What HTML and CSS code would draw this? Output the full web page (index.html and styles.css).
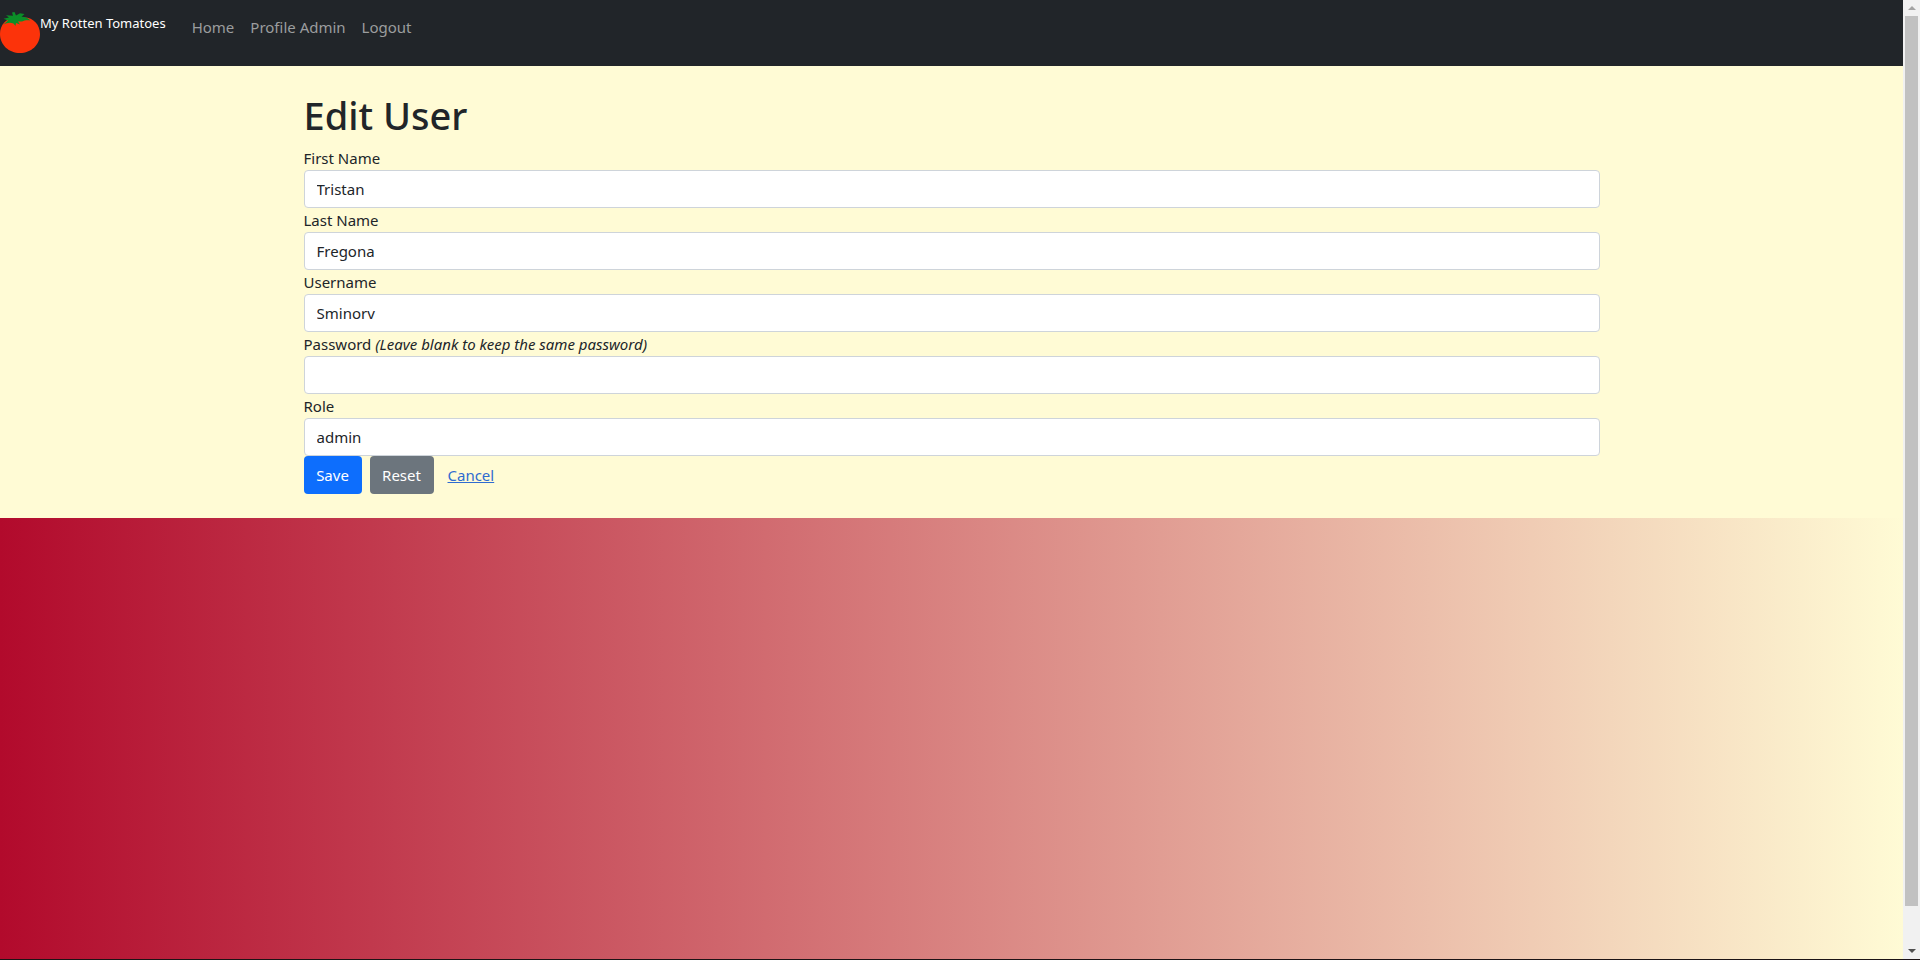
FILE: index.html
```html
<!DOCTYPE html>
<html lang="en">
<head>
<meta charset="utf-8">
<title>Edit User</title>
<link rel="stylesheet" href="styles.css">
</head>
<body>
<div class="window">
  <div class="page">
    <header class="navbar">
      <a class="brand" href="#">
        <svg class="logo" viewBox="0 0 40 41" aria-hidden="true">
          <path fill="#fc330a" d="M20 6C32 3.500 40 12 40 22 40 33 31 41 20 41S0 33 0 22C0 12 8 3.500 20 6Z"/>
          <path fill="#0b8f28" d="M12 .6 14.500 0 16 3.400 20 1.200 24.500 2 21.500 4.700C25 4.600 28.500 6 30.500 8.600 27 8 24.500 8.600 22 9.400L18 9.600 20 12.400 16 11 15.500 14 13.500 11.500C10 10 7 11 3.500 12.400L8 8.600 3.500 6.800 9 5.400 6 3.200 13 3.800Z"/>
        </svg>
        <span class="brand-name">My Rotten Tomatoes</span>
      </a>
      <nav class="nav">
        <a class="nav-link" href="#">Home</a>
        <a class="nav-link" href="#">Profile Admin</a>
        <a class="nav-link" href="#">Logout</a>
      </nav>
    </header>
    <main class="content">
      <div class="container">
        <h1 class="title">Edit User</h1>
        <form class="form">
          <label class="label" for="first">First Name</label>
          <input class="control" id="first" type="text" value="Tristan">
          <label class="label" for="last">Last Name</label>
          <input class="control" id="last" type="text" value="Fregona">
          <label class="label" for="username">Username</label>
          <input class="control" id="username" type="text" value="Sminorv">
          <label class="label" for="password">Password <i>(Leave blank to keep the same password)</i></label>
          <input class="control" id="password" type="password">
          <label class="label" for="role">Role</label>
          <select class="control" id="role"><option>admin</option></select>
          <div class="actions">
            <button class="btn btn-primary" type="submit">Save</button>
            <button class="btn btn-secondary" type="reset">Reset</button>
            <a class="cancel" href="#">Cancel</a>
          </div>
        </form>
      </div>
    </main>
  </div>
  <div class="scrollbar" aria-hidden="true">
    <svg class="arrow arrow-up" viewBox="0 0 8 4"><path d="M0 4 4 0 8 4Z"/></svg>
    <div class="track"><div class="thumb"></div></div>
    <svg class="arrow arrow-down" viewBox="0 0 8 4"><path d="M0 0H8L4 4Z"/></svg>
  </div>
</div>
</body>
</html>
```
FILE: styles.css
```css
* { box-sizing: border-box; }
body {
  margin: 0;
  font: 15px/24px "Noto Sans", "Open Sans", sans-serif;
  color: #212529;
}
.window {
  display: flex;
  min-height: 100vh;
  border-bottom: 1px solid #1c1416;
}
.page {
  flex: 1;
  background: linear-gradient(to right, #b20a2c, #fffbd5);
}
.navbar {
  display: flex;
  align-items: flex-start;
  min-height: 66px;
  padding-top: 8px;
  background: #212529;
}
.brand {
  display: flex;
  align-items: flex-start;
  margin-right: 18px;
  padding-top: 4px;
  font-size: 13px;
  color: #fff;
  text-decoration: none;
}
.logo { width: 40px; height: 41px; }
.brand-name { line-height: 22px; }
.nav { display: flex; }
.nav-link {
  padding: 8px;
  line-height: 22px;
  color: #9b9d9e;
  text-decoration: none;
}
.content {
  padding: 24px 0;
  background: #fffbd5;
}
.container {
  max-width: 1320px;
  margin: 0 auto;
  padding: 0 12px;
}
.title {
  margin: 0 0 6px;
  font-size: 38px;
  font-weight: 500;
  line-height: 50px;
}
.form { display: grid; }
.control {
  width: 100%;
  height: 38px;
  padding: 0 12px;
  border: 1px solid #ced4da;
  border-radius: 4px;
  background: #fff;
  color: #212529;
  font: inherit;
  appearance: none;
}
.actions { display: flex; gap: 8px; }
.btn {
  min-width: 58px;
  height: 38px;
  padding: 0 12px;
  border: 0;
  border-radius: 4px;
  font: inherit;
  color: #fff;
}
.btn-primary { background: #0d6efd; }
.btn-secondary { min-width: 64px; background: #6c757d; }
.cancel {
  padding: 7px 6px;
  color: #2f6bd0;
}
.scrollbar {
  display: flex;
  flex-direction: column;
  align-items: center;
  width: 17px;
  background: #f1f1f1;
}
.arrow { width: 8px; height: 4px; }
.arrow-up { margin: 6px 0; fill: #a3a3a3; }
.arrow-down { margin: 6px 0; fill: #505050; }
.track { flex: 1; }
.thumb {
  width: 13px;
  height: 96%;
  background: #c1c1c1;
}
```
